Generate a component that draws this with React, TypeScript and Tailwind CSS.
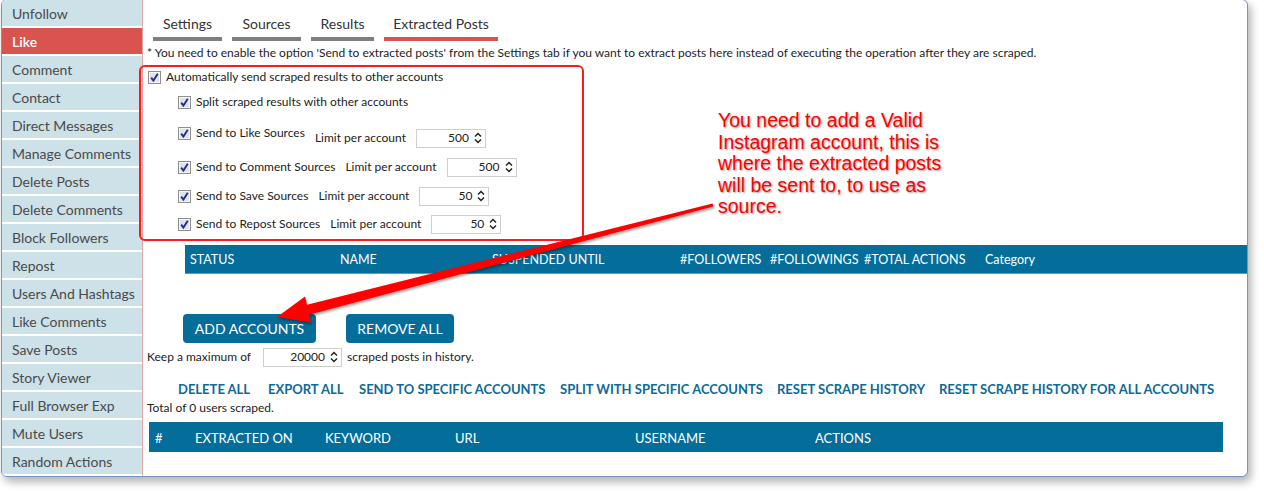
import React from "react";

const menu = [
  "Unfollow",
  "Like",
  "Comment",
  "Contact",
  "Direct Messages",
  "Manage Comments",
  "Delete Posts",
  "Delete Comments",
  "Block Followers",
  "Repost",
  "Users And Hashtags",
  "Like Comments",
  "Save Posts",
  "Story Viewer",
  "Full Browser Exp",
  "Mute Users",
  "Random Actions",
];

const tabs = [
  { label: "Settings", w: "w-[69px]", active: false },
  { label: "Sources", w: "w-[69px]", active: false },
  { label: "Results", w: "w-[63px]", active: false },
  { label: "Extracted Posts", w: "w-[114px]", active: true },
];

const accHeaders = [
  { label: "STATUS", w: "w-[150px]" },
  { label: "NAME", w: "w-[152px]" },
  { label: "SUSPENDED UNTIL", w: "w-[188px]" },
  { label: "#FOLLOWERS", w: "w-[90px]" },
  { label: "#FOLLOWINGS", w: "w-[94px]" },
  { label: "#TOTAL ACTIONS", w: "w-[121px]" },
  { label: "Category", w: "w-[120px]" },
];

const postHeaders = [
  { label: "#", w: "w-[40px]" },
  { label: "EXTRACTED ON", w: "w-[130px]" },
  { label: "KEYWORD", w: "w-[130px]" },
  { label: "URL", w: "w-[180px]" },
  { label: "USERNAME", w: "w-[180px]" },
  { label: "ACTIONS", w: "w-[120px]" },
];

const links = [
  { label: "DELETE ALL", w: "w-[90px]" },
  { label: "EXPORT ALL", w: "w-[91px]" },
  { label: "SEND TO SPECIFIC ACCOUNTS", w: "w-[201px]" },
  { label: "SPLIT WITH SPECIFIC ACCOUNTS", w: "w-[217px]" },
  { label: "RESET SCRAPE HISTORY", w: "w-[162px]" },
  { label: "RESET SCRAPE HISTORY FOR ALL ACCOUNTS", w: "" },
];

function Check() {
  return (
    <svg width="13" height="13" viewBox="0 0 13 13" className="shrink-0">
      <rect x="0.5" y="0.5" width="12" height="12" fill="#f6f6f6" stroke="#8e8f8f" />
      <rect x="2" y="2" width="9" height="9" fill="#dfe3ea" />
      <path d="M3.2 6.6 L5.4 9.6 L9.8 2.8" fill="none" stroke="#23318a" strokeWidth="1.9" />
    </svg>
  );
}

function Spinner({ value, w }: { value: string; w: string }) {
  return (
    <div className={`${w} h-[19px] border border-[#cfcfcf] bg-white flex items-center justify-end pr-[3px] gap-[5px]`}>
      <span className="text-[12px] text-[#222]">{value}</span>
      <svg width="8" height="12" viewBox="0 0 8 12">
        <path d="M1 4.5 L4 1.5 L7 4.5" fill="none" stroke="#222" strokeWidth="1.5" />
        <path d="M1 7.5 L4 10.5 L7 7.5" fill="none" stroke="#222" strokeWidth="1.5" />
      </svg>
    </div>
  );
}

function LimitRow({ label, value, w, mt, lift }: { label: string; value: string; w: string; mt: string; lift?: boolean }) {
  return (
    <div className={`${mt} ml-[30px] h-[20px] flex items-center`}>
      <div className={`flex items-center gap-[5px] ${lift ? "mb-[10px]" : ""}`}>
        <Check />
        <span className="text-[12px] text-[#222] whitespace-nowrap">{label}</span>
      </div>
      <span className="ml-[10px] text-[12px] text-[#222] whitespace-nowrap">Limit per account</span>
      <div className="ml-[10px]">
        <Spinner value={value} w={w} />
      </div>
    </div>
  );
}

export default function App() {
  return (
    <div className="relative w-[1264px] h-[493px] bg-white overflow-hidden font-['Lato','Open_Sans',sans-serif]">
      <div className="-mt-px ml-[1px] w-[1247px] h-[478px] border border-[#7894c0] rounded-[6px] bg-white flex overflow-hidden shadow-[3px_5px_8px_rgba(0,0,0,0.3)]">
        {/* sidebar */}
        <div className="w-[141px] shrink-0 flex flex-col gap-[2px] border-r border-[#e3a5a5] bg-white">
          {menu.map((m) => (
            <div
              key={m}
              className={`h-[26px] flex items-center pl-[10px] text-[14px] ${
                m === "Like" ? "bg-[#d9534f] text-white font-semibold" : "bg-[#cde1e9] text-[#4a4a4a]"
              }`}
            >
              {m}
            </div>
          ))}
        </div>

        {/* main */}
        <div className="flex-1 flex flex-col pl-[4px]">
          <div className="mt-[14px] ml-[6px] flex gap-[10px]">
            {tabs.map((t) => (
              <div key={t.label} className={`${t.w} flex flex-col items-center`}>
                <span className="text-[14px] leading-[19px] text-[#333]">{t.label}</span>
                <div className={`mt-[4px] h-[4px] w-full ${t.active ? "bg-[#d9534f]" : "bg-[#7f7f7f]"}`} />
              </div>
            ))}
          </div>

          <div className="mt-[5px] text-[12px] leading-[14px] text-[#1c1c2c] whitespace-nowrap">
            * You need to enable the option 'Send to extracted posts' from the Settings tab if you want to extract posts here instead of executing the operation after they are scraped.
          </div>

          <div className="mt-[5px] -ml-[8px] w-[445px] h-[176px] border-2 border-[#ff1a1a] rounded-[6px] pl-[7px] flex flex-col">
            <div className="h-[20px] flex items-center gap-[5px]">
              <Check />
              <span className="text-[12px] text-[#222]">Automatically send scraped results to other accounts</span>
            </div>
            <div className="mt-[5px] ml-[30px] h-[20px] flex items-center gap-[5px]">
              <Check />
              <span className="text-[12px] text-[#222]">Split scraped results with other accounts</span>
            </div>
            <LimitRow label="Send to Like Sources" value="500" w="w-[70px]" mt="mt-[16px]" lift />
            <LimitRow label="Send to Comment Sources" value="500" w="w-[70px]" mt="mt-[9px]" />
            <LimitRow label="Send to Save Sources" value="50" w="w-[70px]" mt="mt-[9px]" />
            <LimitRow label="Send to Repost Sources" value="50" w="w-[70px]" mt="mt-[8px]" />
          </div>

          <div className="mt-[4px] ml-[38px] h-[29px] bg-[#056d9a] flex items-center pl-[5px] pt-[3px] border-b border-[#5b9bbd]">
            {accHeaders.map((h) => (
              <span key={h.label} className={`${h.w} shrink-0 text-[12.5px] text-white whitespace-nowrap`}>
                {h.label}
              </span>
            ))}
          </div>

          <div className="mt-[40px] ml-[36px] flex gap-[30px]">
            <button className="w-[133px] h-[29px] rounded-[4px] bg-[#056d9a] text-white text-[14px]">ADD ACCOUNTS</button>
            <button className="w-[108px] h-[29px] rounded-[4px] bg-[#056d9a] text-white text-[14px]">REMOVE ALL</button>
          </div>

          <div className="mt-[4px] h-[20px] flex items-center text-[12px] text-[#222]">
            <span className="w-[116px]">Keep a maximum of</span>
            <Spinner value="20000" w="w-[79px]" />
            <span className="ml-[5px]">scraped posts in history.</span>
          </div>

          <div className="mt-[13px] ml-[31px] flex">
            {links.map((l) => (
              <span key={l.label} className={`${l.w} shrink-0 text-[13px] leading-[18px] font-bold text-[#0e6a97] whitespace-nowrap`}>
                {l.label}
              </span>
            ))}
          </div>

          <div className="mt-[2px] text-[12px] leading-[16px] text-[#222]">Total of 0 users scraped.</div>

          <div className="mt-[6px] ml-[2px] mr-[24px] h-[30px] bg-[#056d9a] flex items-center pl-[6px] pt-[3px]">
            {postHeaders.map((h) => (
              <span key={h.label} className={`${h.w} shrink-0 text-[13px] text-white whitespace-nowrap`}>
                {h.label}
              </span>
            ))}
          </div>
        </div>
      </div>

      {/* annotation overlay */}
      <svg className="absolute left-0 top-0 pointer-events-none drop-shadow-[1px_2px_1px_rgba(0,0,0,0.35)]" width="1264" height="493">
        <polygon
          points="713.4,206.5 309,314.8 311,322.5 277,317 305,296.5 307,304.8 712.6,203.5"
          fill="#ff0000"
        />
      </svg>
      <div className="absolute left-[718px] top-[110px] text-[19.5px] leading-[21.5px] text-[#ff0000] font-['Liberation_Sans',Arial,sans-serif] [text-shadow:1px_1px_2px_#9a9a9a,-1px_-1px_0_#fff]">
        You need to add a Valid
        <br />
        Instagram account, this is
        <br />
        where the extracted posts
        <br />
        will be sent to, to use as
        <br />
        source.
      </div>
    </div>
  );
}
